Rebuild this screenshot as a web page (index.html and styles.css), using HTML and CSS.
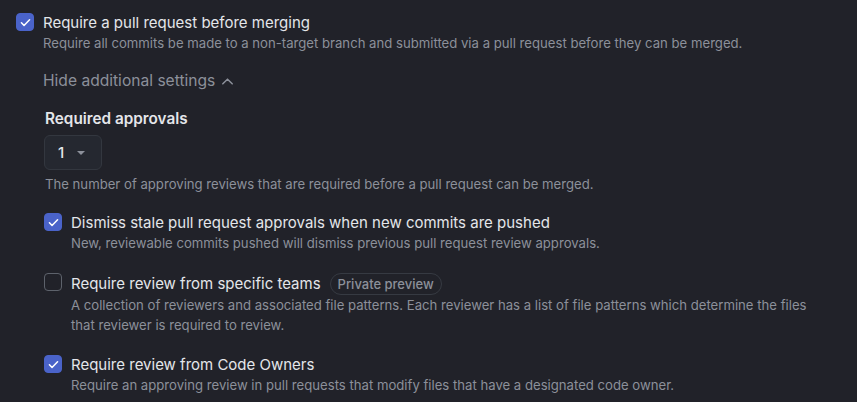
FILE: index.html
```html
<!DOCTYPE html>
<html>
<head>
<meta charset="utf-8">
<link rel="stylesheet" href="styles.css">
</head>
<body>
<div class="page">
  <div class="rule top">
    <span class="cb checked"><svg viewBox="0 0 16 16" width="13" height="13"><path d="M3 8.4l3.2 3.2L13 4.6" fill="none" stroke="#fff" stroke-width="1.9" stroke-linecap="round" stroke-linejoin="round"/></svg></span>
    <div class="body">
      <div class="title">Require a pull request before merging</div>
      <div class="desc">Require all commits be made to a non-target branch and submitted via a pull request before they can be merged.</div>
    </div>
  </div>
  <div class="nested">
    <div class="toggle">Hide additional settings <svg class="chev" viewBox="0 0 16 16" width="15" height="15"><path d="M3 10.5L8 5.5l5 5" fill="none" stroke="currentColor" stroke-width="1.6" stroke-linecap="round" stroke-linejoin="round"/></svg></div>
    <div class="approvals">
      <div class="label">Required approvals</div>
      <div class="select"><span class="num">1</span><span class="caret"></span></div>
      <div class="desc">The number of approving reviews that are required before a pull request can be merged.</div>
    </div>
    <div class="rule r2">
      <span class="cb checked"><svg viewBox="0 0 16 16" width="13" height="13"><path d="M3 8.4l3.2 3.2L13 4.6" fill="none" stroke="#fff" stroke-width="1.9" stroke-linecap="round" stroke-linejoin="round"/></svg></span>
      <div class="body">
        <div class="title">Dismiss stale pull request approvals when new commits are pushed</div>
        <div class="desc">New, reviewable commits pushed will dismiss previous pull request review approvals.</div>
      </div>
    </div>
    <div class="rule r3">
      <span class="cb"></span>
      <div class="body">
        <div class="title">Require review from specific teams <span class="badge">Private preview</span></div>
        <div class="desc">A collection of reviewers and associated file patterns. Each reviewer has a list of file patterns which determine the files that reviewer is required to review.</div>
      </div>
    </div>
    <div class="rule r4">
      <span class="cb checked"><svg viewBox="0 0 16 16" width="13" height="13"><path d="M3 8.4l3.2 3.2L13 4.6" fill="none" stroke="#fff" stroke-width="1.9" stroke-linecap="round" stroke-linejoin="round"/></svg></span>
      <div class="body">
        <div class="title">Require review from Code Owners</div>
        <div class="desc">Require an approving review in pull requests that modify files that have a designated code owner.</div>
      </div>
    </div>
  </div>
</div>
</body>
</html>
```

FILE: styles.css
```css
html, body {
  margin: 0;
  padding: 0;
  background: #212229;
}
body {
  font-family: Inter, "Liberation Sans", sans-serif;
  color: #e4e6ea;
  width: 857px;
  height: 402px;
  overflow: hidden;
}
.page {
  padding: 13px 0 0 16px;
}
.rule {
  display: flex;
  gap: 9px;
  align-items: flex-start;
}
.body {
  max-width: 745px;
}
.cb {
  flex: none;
  width: 16px;
  height: 16px;
  margin-top: 0;
  border: 1px solid #5d626b;
  border-radius: 4px;
  display: flex;
  align-items: center;
  justify-content: center;
}
.cb.checked {
  background: #4a63c9;
  border-color: #4a63c9;
}
.title {
  font-size: 15px;
  line-height: 20px;
  display: flex;
  align-items: center;
  gap: 9px;
}
.desc {
  font-size: 13.15px;
  line-height: 20px;
  color: #8c909a;
}
.nested {
  padding-left: 28px;
}
.toggle {
  margin-top: 18px;
  font-size: 15.6px;
  line-height: 20px;
  color: #8c909a;
  display: flex;
  align-items: center;
  gap: 5px;
  margin-left: -1px;
}
.approvals {
  margin-top: 18px;
  padding-left: 1px;
}
.label {
  font-size: 15.3px;
  font-weight: 600;
  line-height: 20px;
}
.select {
  margin-top: 6px;
  width: 56px;
  height: 33px;
  border: 1px solid #33373f;
  border-radius: 6px;
  background: #252830;
  display: flex;
  align-items: center;
  box-sizing: content-box;
  margin-left: -1px;
  margin-bottom: 4px;
}
.num {
  font-size: 15px;
  margin-left: 13px;
  font-weight: 500;
}
.caret {
  width: 0;
  height: 0;
  border-left: 4px solid transparent;
  border-right: 4px solid transparent;
  border-top: 4px solid #8c909a;
  margin-left: 13px;
}
.r2 { margin-top: 19px; }
.r3 { margin-top: 20px; }
.r4 { margin-top: 20px; }
.badge {
  font-size: 13px;
  font-weight: 500;
  color: #8c909a;
  border: 1px solid #363a42;
  border-radius: 11px;
  padding: 0 7px;
  line-height: 20px;
}
```
